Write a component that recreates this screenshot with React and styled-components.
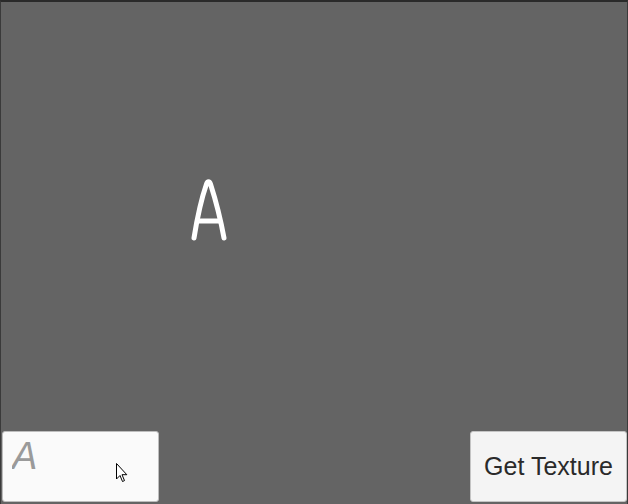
import React from "react";
import styled, { createGlobalStyle } from "styled-components";

const Global = createGlobalStyle`
  html, body { margin: 0; padding: 0; background: #636363; }
  body { font-family: "Liberation Sans", Arial, sans-serif; }
  * { box-sizing: border-box; }
`;

const Screen = styled.div`
  width: 628px;
  height: 504px;
  background: #646464;
  border-top: 2px solid #2a2a2a;
  border-left: 1px solid #3a3a3a;
  border-right: 1px solid #3a3a3a;
  display: flex;
  flex-direction: column;
  overflow: hidden;
`;

const Stage = styled.div`
  flex: 1;
  position: relative;
`;

const Drawing = styled.svg`
  display: block;
  width: 100%;
  height: 100%;
`;

const Controls = styled.div`
  display: flex;
  justify-content: space-between;
  align-items: flex-end;
  padding: 0 0 2px 1px;
`;

const Field = styled.div`
  position: relative;
  width: 157px;
  height: 71px;
  background: #fafafa;
  border: 1px solid #bdbdbd;
  border-radius: 3px;
  display: flex;
  align-items: flex-start;
  padding: 3px 0 0 9px;
`;

const Input = styled.input`
  width: 100%;
  border: none;
  outline: none;
  background: transparent;
  font-family: "Liberation Sans", Arial, sans-serif;
  font-size: 38px;
  font-style: italic;
  color: #333;
  padding: 0;
  &::placeholder { color: #9a9a9a; }
`;

const Cursor = styled.svg`
  position: absolute;
  left: 111px;
  top: 30px;
`;

const Button = styled.button`
  width: 157px;
  height: 71px;
  background: #f4f4f4;
  border: 1px solid #c4c4c4;
  border-radius: 3px;
  font-family: "Liberation Sans", Arial, sans-serif;
  font-size: 25px;
  color: #2a2a2a;
  padding: 0 0 1px 0;
  cursor: pointer;
`;

export default function App() {
  return (
    <>
      <Global />
      <Screen>
        <Stage>
          <Drawing viewBox="0 0 626 429">
            <g
              fill="none"
              stroke="#ffffff"
              strokeWidth="5"
              strokeLinecap="round"
              strokeLinejoin="round"
            >
              <path d="M193 236 C196.5 214 201 195 205.5 182 C206.5 179 208.5 179 209.5 182 C214 196 219 214 223 236" />
              <path d="M198 219 L218 219" />
            </g>
          </Drawing>
        </Stage>
        <Controls>
          <Field>
            <Input placeholder="A" />
            <Cursor width="14" height="22" viewBox="0 0 14 22">
              <path
                d="M2.5 1.5 L2.5 17 L6 13.5 L8.5 19.5 L10.5 18.6 L8 12.7 L12.8 12.7 Z"
                fill="#ffffff"
                stroke="#000000"
                strokeWidth="1"
                strokeLinejoin="miter"
              />
            </Cursor>
          </Field>
          <Button>Get Texture</Button>
        </Controls>
      </Screen>
    </>
  );
}
